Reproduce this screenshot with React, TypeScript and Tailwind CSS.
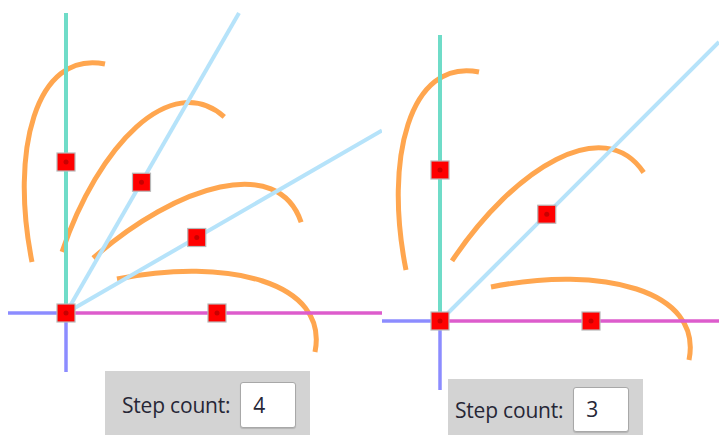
const ARC = { sx: 51, sy: 34, c1x: 161, c1y: 56, c2x: 263, c2y: 31, ex: 249, ey: -39 };
const R = 151;

type PanelProps = {
  ox: number;
  oy: number;
  angles: number[];
  width: number;
  height: number;
  lines: { x: number; y: number }[];
  axis: { top: number; left: number; bottom: number; right: number };
};

const Arc = ({ ox, oy, a }: { ox: number; oy: number; a: number }) => (
  <path
    d={`M${ox + ARC.sx},${oy - ARC.sy} C${ox + ARC.c1x},${oy - ARC.c1y} ${ox + ARC.c2x},${oy - ARC.c2y} ${ox + ARC.ex},${oy - ARC.ey}`}
    transform={`rotate(${-a} ${ox} ${oy})`}
    fill="none"
    stroke="#ffa64f"
    strokeWidth={5}
  />
);

const Handle = ({ x, y }: { x: number; y: number }) => (
  <g>
    <rect x={x - 9} y={y - 9} width={18} height={18} fill="#ff0000" stroke="#b8b8b8" strokeWidth={1.2} />
    <circle cx={x} cy={y} r={2.5} fill="#b00000" opacity={0.7} />
  </g>
);

const Canvas = ({ ox, oy, angles, width, height, lines, axis }: PanelProps) => {
  const handles = [{ x: ox, y: oy }].concat(
    angles.map((a) => ({
      x: ox + R * Math.cos((a * Math.PI) / 180),
      y: oy - R * Math.sin((a * Math.PI) / 180),
    }))
  );
  return (
    <svg width={width} height={height} className="block overflow-visible">
      {angles.map((a) => (
        <Arc key={a} ox={ox} oy={oy} a={a} />
      ))}
      <line x1={axis.left} y1={oy} x2={ox} y2={oy} stroke="#8c8cff" strokeWidth={3.5} />
      <line x1={ox} y1={oy} x2={ox} y2={axis.bottom} stroke="#8c8cff" strokeWidth={3.5} />
      <line x1={ox} y1={oy} x2={axis.right} y2={oy} stroke="#dd5ccc" strokeWidth={3.5} />
      <line x1={ox} y1={oy} x2={ox} y2={axis.top} stroke="#6fdcc8" strokeWidth={4} />
      {lines.map((l, i) => (
        <line key={i} x1={ox} y1={oy} x2={l.x} y2={l.y} stroke="#b6e3fa" strokeWidth={4} />
      ))}
      {handles.map((h, i) => (
        <Handle key={i} x={h.x} y={h.y} />
      ))}
    </svg>
  );
};

const StepCount = ({ value, className, inputClass }: { value: number; className: string; inputClass: string }) => (
  <div className={`flex items-center bg-[#d3d3d3] ${className}`}>
    <span className="text-[21px] leading-[24px] tracking-[-0.2px] text-[#262636]">Step count:</span>
    <div
      className={`ml-[10px] w-[56px] rounded-[3px] border border-[#a8a8a8] bg-white pl-[12px] text-[21px] text-[#262636] shadow-[0_1px_1px_rgba(0,0,0,0.15)] ${inputClass}`}
    >
      {value}
    </div>
  </div>
);

export default function App() {
  return (
    <div
      className="flex h-[435px] w-[719px] overflow-hidden bg-white"
      style={{ fontFamily: '"Open Sans", "Noto Sans", sans-serif' }}
    >
      <div className="flex w-[382px] flex-col overflow-hidden">
        <Canvas
          ox={66}
          oy={313}
          angles={[0, 30, 60, 90]}
          width={382}
          height={371}
          lines={[
            { x: 239, y: 13 },
            { x: 382, y: 130.5 },
          ]}
          axis={{ top: 13, left: 8, bottom: 372, right: 382 }}
        />
        <StepCount
          value={4}
          className="ml-[105px] h-[64px] w-[205px] pl-[17px] pt-[11px] pb-[7px]"
          inputClass="h-[46px] leading-[44px]"
        />
      </div>
      <div className="flex w-[337px] flex-col overflow-hidden">
        <Canvas
          ox={58}
          oy={321}
          angles={[0, 45, 90]}
          width={337}
          height={379}
          lines={[{ x: 337, y: 42 }]}
          axis={{ top: 35, left: 0, bottom: 390, right: 337 }}
        />
        <StepCount
          value={3}
          className="ml-[66px] h-[56px] w-[195px] pl-[7px] pt-[8px] pb-[3px]"
          inputClass="h-[45px] leading-[43px]"
        />
      </div>
    </div>
  );
}
